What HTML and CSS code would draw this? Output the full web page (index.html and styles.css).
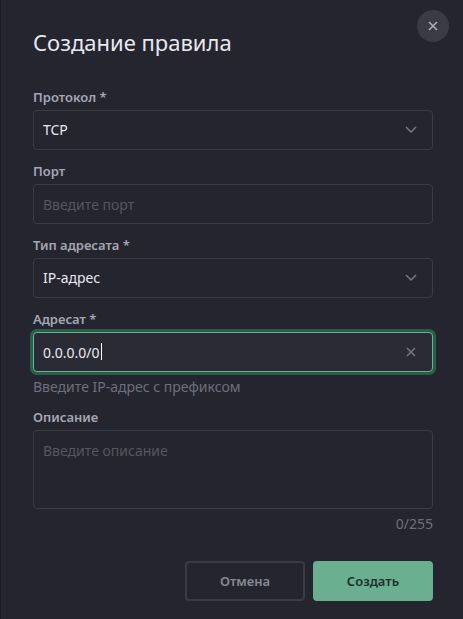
FILE: index.html
```
<!DOCTYPE html>
<html lang="ru">
<head>
    <meta charset="UTF-8">
    <meta name="viewport" content="width=device-width, initial-scale=1.0">
    <title>Создание правила</title>
    <link rel="stylesheet" href="styles.css">
</head>
<body>
    <form class="drawer">
        <button class="close-btn" type="button" aria-label="Закрыть">
            <svg width="10" height="10" viewBox="0 0 10 10"><path d="M1 1l8 8M9 1l-8 8"/></svg>
        </button>

        <h1 class="title">Создание правила</h1>

        <!-- Rule fields -->
        <div class="fields">
            <div class="field">
                <label for="protocol">Протокол *</label>
                <div class="control">
                    <select id="protocol">
                        <option>TCP</option>
                        <option>UDP</option>
                    </select>
                    <svg class="chevron" width="12" height="8" viewBox="0 0 12 8"><path d="M1 1l5 5 5-5"/></svg>
                </div>
            </div>

            <div class="field">
                <label for="port">Порт</label>
                <input id="port" type="text" placeholder="Введите порт">
            </div>

            <div class="field">
                <label for="target-type">Тип адресата *</label>
                <div class="control">
                    <select id="target-type">
                        <option>IP-адрес</option>
                    </select>
                    <svg class="chevron" width="12" height="8" viewBox="0 0 12 8"><path d="M1 1l5 5 5-5"/></svg>
                </div>
            </div>

            <div class="field">
                <label for="target">Адресат *</label>
                <div class="control">
                    <input id="target" class="active" type="text" value="0.0.0.0/0">
                    <span class="caret"></span>
                    <button class="clear-btn" type="button" aria-label="Очистить">
                        <svg width="10" height="10" viewBox="0 0 10 10"><path d="M1 1l8 8M9 1l-8 8"/></svg>
                    </button>
                </div>
                <div class="hint">Введите IP-адрес с префиксом</div>
            </div>

            <div class="field">
                <label for="description">Описание</label>
                <textarea id="description" maxlength="255" placeholder="Введите описание"></textarea>
                <div class="hint counter">0/255</div>
            </div>
        </div>

        <!-- Buttons -->
        <div class="actions">
            <button class="btn btn-cancel" type="button">Отмена</button>
            <button class="btn btn-create" type="submit">Создать</button>
        </div>
    </form>
</body>
</html>
```
FILE: styles.css
```
* {
    box-sizing: border-box;
}

body {
    margin: 0;
    min-height: 100vh;
    background: #1b1a21;
    font-family: 'Noto Sans', 'Open Sans', sans-serif;
    font-size: 14px;
    line-height: 20px;
    color: #e8e8f0;
}

.drawer {
    position: relative;
    min-height: 100vh;
    margin-left: 1px;
    padding: 26px 30px 18px 32px;
    background: #25252f;
}

.title {
    margin: 0 0 29px;
    font-size: 22px;
    line-height: 32px;
    font-weight: 400;
}

/* Fields */
.fields {
    display: flex;
    flex-direction: column;
    gap: 11px;
}
.field {
    display: flex;
    flex-direction: column;
    gap: 3px;
}
label {
    font-size: 13px;
    font-weight: 600;
    color: #a5a6b5;
}
.control {
    position: relative;
}
input, select, textarea {
    display: block;
    width: 100%;
    height: 40px;
    margin: 0;
    padding: 0 9px;
    border: 1px solid #3b3b46;
    border-radius: 4px;
    outline: none;
    background: transparent;
    color: inherit;
    font: inherit;
    appearance: none;
}
textarea {
    height: 79px;
    padding: 10px 9px;
    resize: none;
}
::placeholder {
    color: #555661;
    opacity: 1;
}
input.active {
    padding-right: 36px;
    border-color: #6aaf90;
    background: #2b2b36;
    box-shadow: 0 0 0 3px #266048;
    caret-color: transparent;
}
.caret {
    position: absolute;
    top: 11px;
    left: 68px;
    width: 1px;
    height: 17px;
    background: #ffffff;
}
.hint {
    margin-top: 3px;
    line-height: 18px;
    color: #6e6f7c;
}
.counter {
    text-align: right;
}

/* Icons */
svg {
    display: block;
    fill: none;
    stroke: #777886;
    stroke-width: 1.5;
}
.chevron {
    position: absolute;
    top: 16px;
    right: 16px;
    pointer-events: none;
}
.clear-btn, .close-btn {
    position: absolute;
    display: flex;
    align-items: center;
    justify-content: center;
    padding: 0;
    border: none;
    background: none;
    cursor: pointer;
}
.clear-btn {
    top: 10px;
    right: 12px;
    width: 20px;
    height: 20px;
}
.close-btn {
    top: 10px;
    right: 14px;
    width: 32px;
    height: 32px;
    border-radius: 50%;
    background: #3b3b46;
}
.close-btn svg {
    stroke: #b0b1c0;
}

/* Buttons */
.actions {
    display: flex;
    justify-content: flex-end;
    gap: 8px;
    margin-top: 28px;
}
.btn {
    width: 120px;
    height: 40px;
    border: 2px solid #3b3b46;
    border-radius: 4px;
    background: transparent;
    color: #888996;
    font: inherit;
    font-size: 13px;
    font-weight: 600;
    cursor: pointer;
}
.btn-create {
    border-color: #6aaf90;
    background: #6aaf90;
    color: #1f3029;
}
```
